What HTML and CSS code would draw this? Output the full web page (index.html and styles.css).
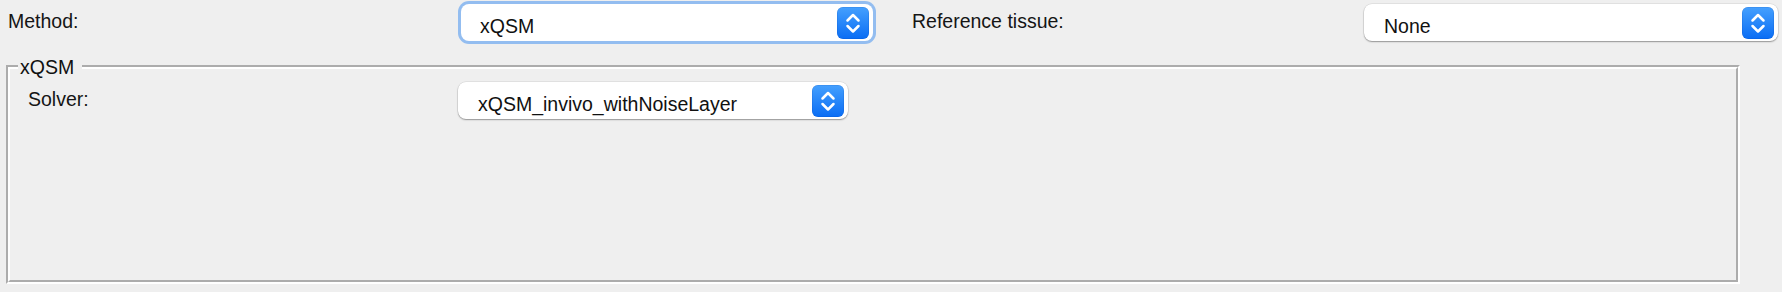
FILE: index.html
```html
<!DOCTYPE html>
<html>
<head>
<meta charset="utf-8">
<link rel="stylesheet" href="styles.css">
</head>
<body>
<div class="page">
  <div class="top-row">
    <div class="field field-a">
      <span class="label">Method:</span>
      <div class="select focused">
        <span class="value">xQSM</span>
        <span class="stepper"><svg width="32" height="32" viewBox="0 0 32 32"><path d="M10.5 13.5 L16 8 L21.5 13.5 M10.5 19 L16 24.5 L21.5 19" fill="none" stroke="#fff" stroke-width="2.5" stroke-linecap="round" stroke-linejoin="round"/></svg></span>
      </div>
    </div>
    <div class="field field-b">
      <span class="label">Reference tissue:</span>
      <div class="select">
        <span class="value">None</span>
        <span class="stepper"><svg width="32" height="32" viewBox="0 0 32 32"><path d="M10.5 13.5 L16 8 L21.5 13.5 M10.5 19 L16 24.5 L21.5 19" fill="none" stroke="#fff" stroke-width="2.5" stroke-linecap="round" stroke-linejoin="round"/></svg></span>
      </div>
    </div>
  </div>
  <div class="group">
    <div class="group-inner">
      <div class="field field-solver">
        <span class="label">Solver:</span>
        <div class="select">
          <span class="value">xQSM_invivo_withNoiseLayer</span>
          <span class="stepper"><svg width="32" height="32" viewBox="0 0 32 32"><path d="M10.5 13.5 L16 8 L21.5 13.5 M10.5 19 L16 24.5 L21.5 19" fill="none" stroke="#fff" stroke-width="2.5" stroke-linecap="round" stroke-linejoin="round"/></svg></span>
        </div>
      </div>
    </div>
    <span class="legend">xQSM</span>
  </div>
</div>
</body>
</html>
```

FILE: styles.css
```css
html, body {
  margin: 0;
  padding: 0;
  background: #efefef;
}

body {
  font-family: "Liberation Sans", Arial, sans-serif;
  font-size: 19.5px;
  line-height: 24px;
  color: #151515;
}

.page {
  width: 1782px;
  height: 292px;
  box-sizing: border-box;
  padding: 4px 0 0 6px;
  overflow: hidden;
}

.top-row {
  display: flex;
  gap: 39px;
  padding-left: 2px;
  height: 37px;
}

.field {
  display: grid;
  align-items: center;
  height: 37px;
}

.field-a {
  grid-template-columns: 453px 412px;
}

.field-b {
  grid-template-columns: 452px 414px;
}

.field-solver {
  grid-template-columns: 430px 390px;
}

.label {
  padding-bottom: 3px;
  white-space: nowrap;
}

.select {
  height: 37px;
  box-sizing: border-box;
  background: #fff;
  border-radius: 8px;
  box-shadow: 0 1px 1.5px rgba(0, 0, 0, 0.35), 0 0 0 0.5px rgba(0, 0, 0, 0.1);
  display: flex;
  align-items: center;
  justify-content: space-between;
  padding: 0 4px 0 20px;
}

.select.focused {
  box-shadow: 0 0 0 3px #93bdf0, 0 1px 1.5px rgba(0, 0, 0, 0.25);
  padding-left: 19px;
}

.value {
  padding-top: 6px;
  white-space: nowrap;
  color: #111;
}

.stepper {
  width: 32px;
  height: 32px;
  border-radius: 6px;
  background: linear-gradient(#45a0fe, #0a6df4);
  display: flex;
  box-shadow: inset 0 0 0 0.5px rgba(0, 60, 160, 0.25);
}

.group {
  position: relative;
  margin-top: 24px;
  width: 1734px;
  height: 219px;
  box-sizing: border-box;
  border: 2px solid;
  border-color: #acacac #ffffff #ffffff #acacac;
}

.group-inner {
  height: 100%;
  box-sizing: border-box;
  border: 2px solid;
  border-color: #ffffff #acacac #acacac #ffffff;
  padding: 13px 0 0 18px;
}

.legend {
  position: absolute;
  top: -12px;
  left: 10px;
  padding: 0 8px 0 2px;
  background: #efefef;
  color: #111;
}
```
